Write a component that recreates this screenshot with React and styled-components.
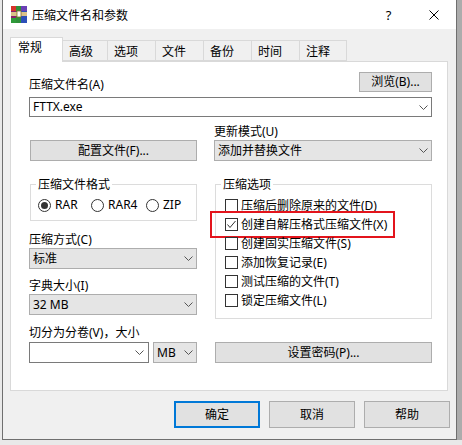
import React from 'react';
import styled, { createGlobalStyle } from 'styled-components';

const Global = createGlobalStyle`
  html, body { margin: 0; padding: 0; }
  body {
    width: 462px;
    height: 445px;
    overflow: hidden;
    background: #e9e9e9;
    font-family: "Noto Sans", "Noto Sans CJK SC", sans-serif;
    font-size: 12px;
    color: #000;
  }
`;

const Window = styled.div`
  box-sizing: border-box;
  margin-left: 2px;
  width: 455px;
  height: 440px;
  background: #f0f0f0;
  border: 1px solid #6f6f6f;
  border-top: none;
  display: flex;
  flex-direction: column;
  box-shadow: 5px 0 0 #acacac;
`;

const TitleBar = styled.div`
  height: 29px;
  background: #fff;
  display: flex;
  align-items: center;
  padding-left: 8px;
  flex-shrink: 0;
`;

const TitleText = styled.div`
  margin-left: 5px;
  flex: 1;
  line-height: 14px;
  font-family: "Noto Sans CJK SC", sans-serif;
`;

const CaptionButton = styled.div`
  width: 45px;
  height: 29px;
  display: flex;
  align-items: center;
  justify-content: center;
  font-family: "Noto Sans", sans-serif;
  font-size: 13px;
`;

const TabBar = styled.div`
  display: flex;
  align-items: flex-end;
  height: 24px;
  margin: 8px 0 0 7px;
  position: relative;
  z-index: 1;
`;

const Tab = styled.div`
  box-sizing: border-box;
  width: ${p => p.$w}px;
  height: ${p => (p.$active ? 25 : 21)}px;
  margin-left: ${p => (p.$first ? 0 : -1)}px;
  margin-bottom: ${p => (p.$active ? -1 : 0)}px;
  border: 1px solid #d9d9d9;
  border-bottom: ${p => (p.$active ? 'none' : '1px solid #d9d9d9')};
  background: ${p => (p.$active ? '#fff' : '#f0f0f0')};
  padding: ${p => (p.$active ? '2px 0 0 7px' : '3px 0 0 6px')};
  line-height: 14px;
  font-family: "Noto Sans CJK SC", sans-serif;
  z-index: ${p => (p.$active ? 2 : 1)};
`;

const Panel = styled.div`
  box-sizing: border-box;
  height: 330px;
  margin: 0 8px 0 7px;
  background: #fff;
  border: 1px solid #d9d9d9;
  padding: 10px 15px 0 18px;
  display: flex;
  flex-direction: column;
`;

const TopRow = styled.div`
  display: flex;
  justify-content: space-between;
  align-items: flex-end;
  height: 20px;
`;

const Label = styled.div`
  line-height: 14px;
  height: 14px;
  white-space: nowrap;
  margin-top: ${p => p.$mt || 0}px;
`;

const Button = styled.button`
  box-sizing: border-box;
  width: ${p => (p.$w ? `${p.$w}px` : 'auto')};
  height: ${p => p.$h || 21}px;
  margin: ${p => p.$m || '0'};
  padding: 0;
  background: #e1e1e1;
  border: ${p => (p.$default ? '2px solid #0078d7' : '1px solid #adadad')};
  font-family: "Noto Sans", "Noto Sans CJK SC", sans-serif;
  font-size: 12px;
  color: #000;
  line-height: 14px;
  display: flex;
  align-items: center;
  justify-content: center;
`;

const Combo = styled.div`
  box-sizing: border-box;
  height: ${p => p.$h || 21}px;
  width: ${p => (p.$w ? `${p.$w}px` : 'auto')};
  flex: ${p => (p.$grow ? 1 : 'none')};
  margin-top: ${p => p.$mt || 0}px;
  background: ${p => (p.$editable ? '#fff' : '#e5e5e5')};
  border: 1px solid ${p => (p.$editable ? '#7a7a7a' : '#adadad')};
  display: flex;
  align-items: center;
  justify-content: space-between;
  padding: 0 ${p => p.$pr || 2}px 0 3px;
  line-height: 14px;
  white-space: nowrap;
`;

const Columns = styled.div`
  display: grid;
  grid-template-columns: 168px 218px;
  column-gap: 17px;
  align-items: ${p => p.$align || 'stretch'};
  margin-top: ${p => p.$mt || 0}px;
`;

const Column = styled.div`
  display: flex;
  flex-direction: column;
`;

const Group = styled.fieldset`
  box-sizing: border-box;
  margin: 0 0 0 1px;
  width: ${p => p.$w}px;
  border: 1px solid #dcdcdc;
  padding: ${p => p.$pad};
  min-width: 0;
`;

const Legend = styled.legend`
  padding: 0 2px;
  margin-left: ${p => p.$ml}px;
  line-height: 14px;
  font-family: "Noto Sans CJK SC", sans-serif;
`;

const RadioRow = styled.div`
  display: flex;
  height: 14px;
  align-items: center;
`;

const RadioItem = styled.div`
  display: flex;
  align-items: center;
  width: ${p => (p.$w ? `${p.$w}px` : 'auto')};
  gap: 4px;
  line-height: 14px;
`;

const RadioCircle = styled.span`
  box-sizing: border-box;
  width: 13px;
  height: 13px;
  border-radius: 50%;
  border: 1px solid #333;
  background: #fff;
  display: flex;
  align-items: center;
  justify-content: center;
  &::after {
    content: '';
    display: ${p => (p.$on ? 'block' : 'none')};
    width: 7px;
    height: 7px;
    border-radius: 50%;
    background: #333;
  }
`;

const CheckList = styled.div`
  display: flex;
  flex-direction: column;
`;

const CheckRow = styled.div`
  position: relative;
  display: flex;
  align-items: center;
  gap: 3px;
  height: 19px;
  line-height: 14px;
  white-space: nowrap;
`;

const Box = styled.span`
  box-sizing: border-box;
  width: 13px;
  height: 13px;
  border: 1px solid #333;
  background: #fff;
  display: flex;
  align-items: center;
  justify-content: center;
  flex-shrink: 0;
`;

const Highlight = styled.div`
  position: absolute;
  left: -15px;
  top: -4px;
  width: 185px;
  height: 27px;
  box-sizing: border-box;
  border: 2px solid #e3141c;
  pointer-events: none;
`;

const SplitRow = styled.div`
  display: flex;
  gap: 4px;
  margin-top: 2px;
`;

const Footer = styled.div`
  display: flex;
  justify-content: flex-end;
  gap: 9px;
  margin-top: 10px;
  padding-right: 6px;
`;

const Chevron = () => (
  <svg width="9" height="5" viewBox="0 0 9 5">
    <path d="M0.5 0.5 L4.5 4.5 L8.5 0.5" fill="none" stroke="#555" strokeWidth="1" />
  </svg>
);

const Check = () => (
  <svg width="11" height="11" viewBox="0 0 11 11">
    <path d="M1.5 5.5 L4 8.5 L9.5 2" fill="none" stroke="#333" strokeWidth="1" />
  </svg>
);

const RarIcon = () => (
  <svg width="16" height="17" viewBox="0 0 16 17">
    <rect x="0" y="0" width="5" height="17" fill="#8b1f6b" />
    <rect x="5" y="0" width="5" height="17" fill="#2f8f3a" />
    <rect x="10" y="0" width="6" height="17" fill="#2c4fb8" />
    <rect x="0" y="0" width="5" height="5" fill="#d6332b" />
    <rect x="10" y="0" width="6" height="5" fill="#6a3fb5" />
    <rect x="0" y="6" width="16" height="4" fill="#d9c28a" />
    <rect x="6" y="5" width="4" height="6" fill="#fff" stroke="#8a6d2a" strokeWidth="0.8" />
    <rect x="0" y="12" width="5" height="5" fill="#2f9a3a" />
  </svg>
);

const CloseIcon = () => (
  <svg width="10" height="10" viewBox="0 0 10 10">
    <path d="M0.5 0.5 L9.5 9.5 M9.5 0.5 L0.5 9.5" stroke="#000" strokeWidth="1" />
  </svg>
);

const tabs = [
  ['常规', 53],
  ['高级', 46],
  ['选项', 49],
  ['文件', 49],
  ['备份', 49],
  ['时间', 49],
  ['注释', 48],
];

const options = [
  ['压缩后删除原来的文件(D)', false],
  ['创建自解压格式压缩文件(X)', true],
  ['创建固实压缩文件(S)', false],
  ['添加恢复记录(E)', false],
  ['测试压缩的文件(T)', false],
  ['锁定压缩文件(L)', false],
];

export default function App() {
  return (
    <>
      <Global />
      <Window>
        <TitleBar>
          <RarIcon />
          <TitleText>压缩文件名和参数</TitleText>
          <CaptionButton>?</CaptionButton>
          <CaptionButton><CloseIcon /></CaptionButton>
        </TitleBar>
        <TabBar>
          {tabs.map(([t, w], i) => (
            <Tab key={t} $w={w} $active={i === 0} $first={i === 0}>{t}</Tab>
          ))}
        </TabBar>
        <Panel>
          <TopRow>
            <Label>压缩文件名(A)</Label>
            <Button $w={73} $h={20}>浏览(B)...</Button>
          </TopRow>
          <Combo $editable $h={20} $mt={5} $pr={3}>
            <span>FTTX.exe</span>
            <Chevron />
          </Combo>
          <Columns $align="end" $mt={8}>
            <Button $w={167} $m="0 0 0 1px">配置文件(F)...</Button>
            <Column>
              <Label>更新模式(U)</Label>
              <Combo $mt={1} $pr={3}>
                <span>添加并替换文件</span>
                <Chevron />
              </Combo>
            </Column>
          </Columns>
          <Columns $mt={16}>
            <Column>
              <Group $w={167} $pad="7px 0 8px 7px">
                <Legend $ml={-2}>压缩文件格式</Legend>
                <RadioRow>
                  <RadioItem $w={53}><RadioCircle $on />RAR</RadioItem>
                  <RadioItem $w={55}><RadioCircle />RAR4</RadioItem>
                  <RadioItem><RadioCircle />ZIP</RadioItem>
                </RadioRow>
              </Group>
              <Label $mt={12}>压缩方式(C)</Label>
              <Combo $mt={1} $pr={3}>
                <span>标准</span>
                <Chevron />
              </Combo>
              <Label $mt={10}>字典大小(I)</Label>
              <Combo $mt={1} $pr={3}>
                <span>32 MB</span>
                <Chevron />
              </Combo>
              <Label $mt={11}>切分为分卷(V)，大小</Label>
              <SplitRow>
                <Combo $editable $grow $pr={4}>
                  <span></span>
                  <Chevron />
                </Combo>
                <Combo $w={44} $pr={3}>
                  <span>MB</span>
                  <Chevron />
                </Combo>
              </SplitRow>
            </Column>
            <Column>
              <Group $w={217} $pad="5px 0 8px 9px">
                <Legend $ml={-4}>压缩选项</Legend>
                <CheckList>
                  {options.map(([t, on]) => (
                    <CheckRow key={t}>
                      {on && <Highlight />}
                      <Box>{on && <Check />}</Box>
                      <span>{t}</span>
                    </CheckRow>
                  ))}
                </CheckList>
              </Group>
              <Button $m="auto 0 0 1px" $w={217}>设置密码(P)...</Button>
            </Column>
          </Columns>
        </Panel>
        <Footer>
          <Button $default $w={86} $h={27}>确定</Button>
          <Button $w={86} $h={27}>取消</Button>
          <Button $w={86} $h={27}>帮助</Button>
        </Footer>
      </Window>
    </>
  );
}
